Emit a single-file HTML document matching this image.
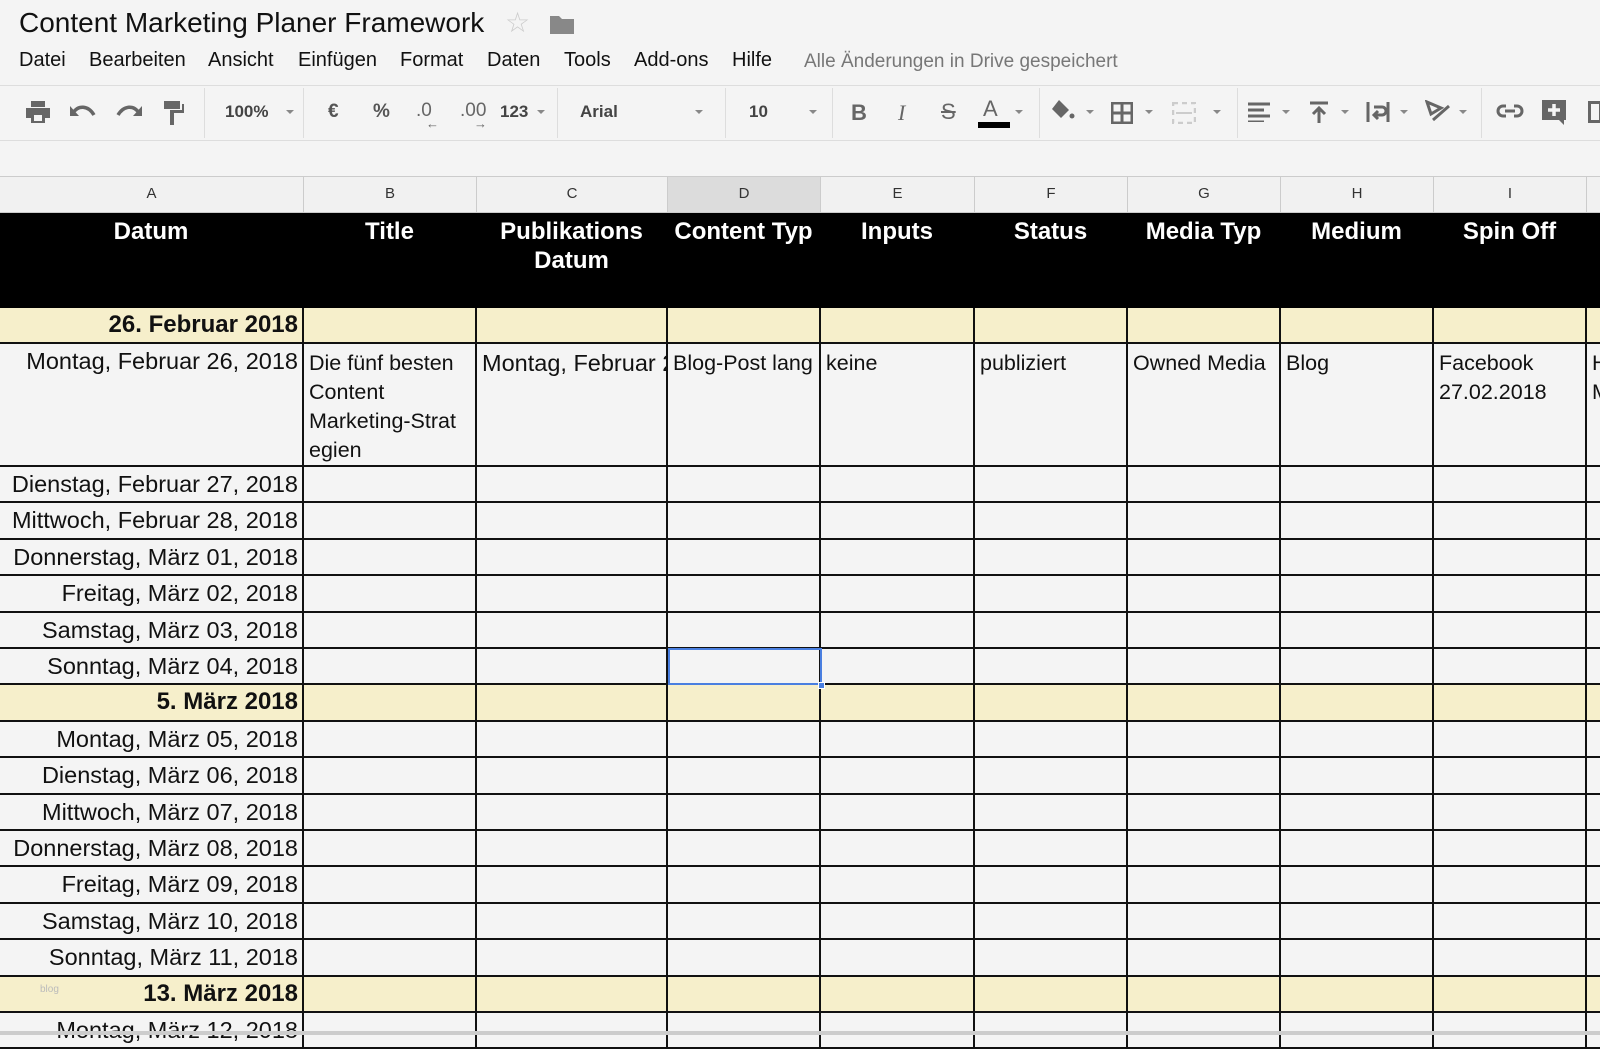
<!DOCTYPE html>
<html><head><meta charset="utf-8"><style>
*{margin:0;padding:0;box-sizing:border-box}
body{width:1600px;height:1035px;overflow:hidden;background:#f4f4f4;font-family:"Liberation Sans",Arial,sans-serif;position:relative}
.a{position:absolute;white-space:nowrap}
.title{left:19px;top:7px;font-size:28px;color:#111}
.menu{top:49px;font-size:20px;color:#111}
.saved{left:804px;top:51px;font-size:19px;color:#777}
.tb{position:absolute;left:0;top:85px;width:1600px;height:56px;border-top:1px solid #ddd;border-bottom:1px solid #ddd;background:#f4f4f4}
.dv{position:absolute;top:88px;width:1px;height:50px;background:#ddd}
.ic{position:absolute;color:#666;font-size:19px;font-weight:bold;white-space:nowrap}
.ar{position:absolute;top:110px;width:0;height:0;border-left:4px solid transparent;border-right:4px solid transparent;border-top:4px solid #888}
.fb{position:absolute;left:0;top:141px;width:1600px;height:36px;border-bottom:1px solid #ccc;background:#f4f4f4}
.ch{position:absolute;top:177px;height:36px;background:#f1f1f1;border-right:1px solid #ccc;border-bottom:1px solid #ccc;font-size:15px;color:#333;text-align:center;line-height:34px}
.c{position:absolute;border-right:2px solid #111;border-bottom:2px solid #111;overflow:hidden;white-space:nowrap}
.h{background:#000;color:#fff;font-weight:bold;font-size:24px;text-align:center;line-height:29px;padding-top:4px;white-space:normal}
.y{background:#f6efcb}
.g{background:#f4f4f4}
.d{font-size:23.5px;color:#111;text-align:right;padding-right:4px;line-height:34px}
.yb{font-size:24px;font-weight:bold;color:#111;text-align:right;padding-right:4px;line-height:34px}
.t{font-size:21.5px;color:#111;padding:5px 5px;line-height:29px;white-space:normal}
</style></head><body>
<div class="a title">Content Marketing Planer Framework</div>
<div class="a" style="left:505px;top:6px;font-size:28px;color:#ccc">☆</div>
<svg class="a" style="left:550px;top:14px" width="24" height="20"><path d="M0 2h9l3 3h12v15H0z" fill="#888"/></svg>
<div class="a menu" style="left:19px">Datei</div>
<div class="a menu" style="left:89px">Bearbeiten</div>
<div class="a menu" style="left:208px">Ansicht</div>
<div class="a menu" style="left:298px">Einfügen</div>
<div class="a menu" style="left:400px">Format</div>
<div class="a menu" style="left:487px">Daten</div>
<div class="a menu" style="left:564px">Tools</div>
<div class="a menu" style="left:634px">Add-ons</div>
<div class="a menu" style="left:732px">Hilfe</div>
<div class="a saved">Alle Änderungen in Drive gespeichert</div>

<div class="tb"></div>
<svg class="a" style="left:26px;top:101px" width="24" height="22"><path d="M5 0h14v6H5z M0 7h24v10h-5v5H5v-5H0z" fill="#666"/><rect x="8" y="14" width="8" height="6" fill="#f4f4f4"/></svg>
<svg class="a" style="left:70px;top:103px" width="26" height="16"><path d="M3 10 C8 2 18 2 24 12" stroke="#666" stroke-width="3.5" fill="none"/><path d="M0 3v10h9z" fill="#666"/></svg>
<svg class="a" style="left:116px;top:103px" width="26" height="16"><path d="M23 10 C18 2 8 2 2 12" stroke="#666" stroke-width="3.5" fill="none"/><path d="M26 3v10h-9z" fill="#666"/></svg>
<svg class="a" style="left:164px;top:101px" width="22" height="24"><path d="M0 0h16v8H0z M16 3h4v9h-10v12h-4v-15h12v-6z" fill="#666"/></svg>
<div class="dv" style="left:204px"></div>
<div class="ic" style="left:225px;top:102px;font-size:17px;color:#444">100%</div>
<div class="ar" style="left:286px"></div>
<div class="dv" style="left:303px"></div>
<div class="ic" style="left:328px;top:101px;color:#555">€</div>
<div class="ic" style="left:373px;top:101px;color:#555">%</div>
<div class="ic" style="left:416px;top:100px;font-weight:normal">.0</div>
<div class="ic" style="left:426px;top:116px;font-size:13px;font-weight:bold">←</div>
<div class="ic" style="left:460px;top:100px;font-weight:normal">.00</div>
<div class="ic" style="left:474px;top:116px;font-size:13px;font-weight:bold">→</div>
<div class="ic" style="left:500px;top:102px;font-size:17px;color:#444">123</div>
<div class="ar" style="left:537px"></div>
<div class="dv" style="left:557px"></div>
<div class="ic" style="left:580px;top:102px;font-size:17px;color:#444">Arial</div>
<div class="ar" style="left:695px"></div>
<div class="dv" style="left:725px"></div>
<div class="ic" style="left:749px;top:102px;font-size:17px;color:#444">10</div>
<div class="ar" style="left:809px"></div>
<div class="dv" style="left:832px"></div>
<div class="ic" style="left:851px;top:100px;font-size:22px">B</div>
<div class="ic" style="left:898px;top:100px;font-size:22px;font-family:'Liberation Serif',serif;font-style:italic;font-weight:normal">I</div>
<div class="ic" style="left:941px;top:99px;font-size:22px;font-weight:normal;text-decoration:line-through">S</div>
<div class="ic" style="left:983px;top:96px;font-size:22px;font-weight:normal">A</div>
<div class="a" style="left:978px;top:122px;width:32px;height:6px;background:#000"></div>
<div class="ar" style="left:1015px"></div>
<div class="dv" style="left:1039px"></div>
<svg class="a" style="left:1051px;top:100px" width="24" height="20"><path d="M8 0l10 10-8 8-9-9z" fill="#666"/><circle cx="21" cy="16" r="2.5" fill="#666"/></svg>
<div class="ar" style="left:1086px"></div>
<svg class="a" style="left:1111px;top:102px" width="22" height="22"><path d="M1 1h20v20H1z M11 1v20 M1 11h20" stroke="#666" stroke-width="3" fill="none"/></svg>
<div class="ar" style="left:1145px"></div>
<svg class="a" style="left:1172px;top:102px" width="24" height="22"><path d="M1 1h22v20H1z" stroke="#ccc" stroke-width="2.5" fill="none" stroke-dasharray="5 4"/><path d="M4 11h16" stroke="#ccc" stroke-width="2"/></svg>
<div class="ar" style="left:1213px"></div>
<div class="dv" style="left:1237px"></div>
<svg class="a" style="left:1248px;top:102px" width="22" height="20"><path d="M0 2h22M0 8h16M0 14h22M0 20h16" stroke="#666" stroke-width="3"/></svg>
<div class="ar" style="left:1282px"></div>
<svg class="a" style="left:1308px;top:101px" width="22" height="22"><path d="M2 2h18M11 22V7M5 13l6-6 6 6" stroke="#666" stroke-width="3" fill="none"/></svg>
<div class="ar" style="left:1341px"></div>
<svg class="a" style="left:1366px;top:101px" width="24" height="22"><path d="M2 1v20M22 1v20M8 6h8a4 4 0 0 1 0 8h-6M12 10l-4 4 4 4" stroke="#666" stroke-width="3" fill="none"/></svg>
<div class="ar" style="left:1400px"></div>
<svg class="a" style="left:1425px;top:100px" width="26" height="24"><path d="M2 2l14 6-10 6z M8 20L24 6" stroke="#666" stroke-width="3" fill="none"/></svg>
<div class="ar" style="left:1459px"></div>
<div class="dv" style="left:1481px"></div>
<svg class="a" style="left:1496px;top:104px" width="28" height="14"><path d="M10 2H7a5 5 0 0 0 0 10h3M18 2h3a5 5 0 0 1 0 10h-3M9 7h10" stroke="#666" stroke-width="3" fill="none"/></svg>
<svg class="a" style="left:1542px;top:100px" width="26" height="26"><path d="M0 0h24v20h-2v5l-5-5H0z" fill="#666"/><path d="M12 4v12M6 10h12" stroke="#f4f4f4" stroke-width="3.5"/></svg>
<div class="a" style="left:1588px;top:101px;width:14px;height:22px;border:3px solid #666"></div>

<div class="fb"></div>

<div class="ch" style="left:0;width:304px">A</div>
<div class="ch" style="left:304px;width:173px">B</div>
<div class="ch" style="left:477px;width:191px">C</div>
<div class="ch" style="left:668px;width:153px;background:#dcdcdc">D</div>
<div class="ch" style="left:821px;width:154px">E</div>
<div class="ch" style="left:975px;width:153px">F</div>
<div class="ch" style="left:1128px;width:153px">G</div>
<div class="ch" style="left:1281px;width:153px">H</div>
<div class="ch" style="left:1434px;width:153px">I</div>
<div class="ch" style="left:1587px;width:20px"></div>

<div id="grid"></div>
<script>
var L=[0,304,477,668,821,975,1128,1281,1434,1587,1600];
var H=["Datum","Title","Publikations Datum","Content Typ","Inputs","Status","Media Typ","Medium","Spin Off",""];
var rows=[];
rows.push({y:213,h:95,t:"h"});
rows.push({y:308,h:36,t:"y",a:"26. Februar 2018"});
rows.push({y:344,h:123,t:"big"});
var ds=["Dienstag, Februar 27, 2018","Mittwoch, Februar 28, 2018","Donnerstag, März 01, 2018","Freitag, März 02, 2018","Samstag, März 03, 2018","Sonntag, März 04, 2018","*5. März 2018","Montag, März 05, 2018","Dienstag, März 06, 2018","Mittwoch, März 07, 2018","Donnerstag, März 08, 2018","Freitag, März 09, 2018","Samstag, März 10, 2018","Sonntag, März 11, 2018","*13. März 2018","Montag, März 12, 2018"];
var y=467;
ds.forEach(function(s){var yy=Math.round(y);var hh=Math.round(y+36.4)-yy;if(s[0]=="*")rows.push({y:yy,h:hh,t:"y",a:s.slice(1)});else rows.push({y:yy,h:hh,t:"g",a:s});y+=36.4;});
var big=["Montag, Februar 26, 2018","Die fünf besten Content Marketing-Strat egien","Montag, Februar 26, 2018","Blog-Post lang","keine","publiziert","Owned Media","Blog","Facebook 27.02.2018","H M"];
var out="";
rows.forEach(function(r){
 for(var i=0;i<10;i++){
  var w=L[i+1]-L[i]+(i==9?10:0);
  var st='left:'+L[i]+'px;top:'+r.y+'px;width:'+w+'px;height:'+r.h+'px;';
  if(r.t=="h"){out+='<div class="c h" style="'+st+'border-color:#000">'+H[i]+'</div>';}
  else if(r.t=="y"){out+='<div class="c y'+(i==0?' yb':'')+'" style="'+st+'">'+(i==0?r.a:'')+'</div>';}
  else if(r.t=="big"){
   if(i==0)out+='<div class="c g d" style="'+st+'">'+big[0]+'</div>';
   else if(i==2)out+='<div class="c g" style="'+st+'font-size:23.5px;color:#111;padding:4px 5px;line-height:30px">'+big[2]+'</div>';
   else out+='<div class="c g t" style="'+st+'">'+big[i]+'</div>';
  } else {out+='<div class="c g'+(i==0?' d':'')+'" style="'+st+'">'+(i==0?r.a:'')+'</div>';}
 }
});
document.getElementById("grid").innerHTML=out;
</script>
<div class="a" style="left:668px;top:648px;width:154px;height:37px;border:2px solid #4a7fe0"></div>
<div class="a" style="left:818px;top:682px;width:7px;height:7px;background:#4a7fe0;border:1px solid #fff"></div>
<div class="a" style="left:40px;top:984px;font-size:10px;color:#bbb">blog</div>
<div class="a" style="left:0;top:1031px;width:1600px;height:4px;background:#ccc"></div>
</body></html>
